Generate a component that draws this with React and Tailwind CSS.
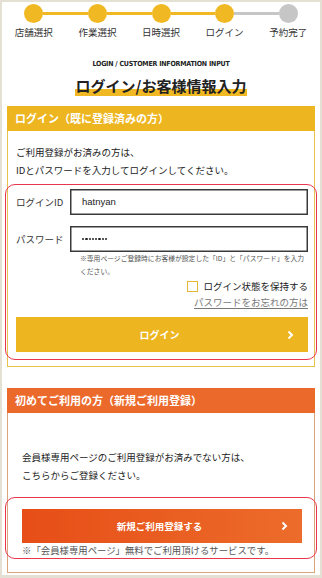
const steps = ['店舗選択', '作業選択', '日時選択', 'ログイン', '予約完了']
const current = 3

function Chevron() {
  return (
    <svg width="7" height="10" viewBox="0 0 7 10" className="shrink-0">
      <polyline points="1.5,1.5 5,5 1.5,8.5" fill="none" stroke="#fff" strokeWidth="2" />
    </svg>
  )
}

function Steps() {
  return (
    <div className="grid grid-cols-5 pt-[2px]">
      {steps.map((label, i) => {
        const leftOn = i <= current
        const rightOn = i + 1 <= current
        const done = i <= current
        return (
          <div key={label} className="flex flex-col items-center">
            <div className="flex w-full items-center h-[19px]">
              <div className={`flex-1 h-[3px] ${i === 0 ? '' : leftOn ? 'bg-[#f0b823]' : 'bg-[#c6c6c6]'}`} />
              <div className={`w-[19px] h-[19px] rounded-full shrink-0 ${done ? 'bg-[#f0b823]' : 'bg-[#c6c6c6]'}`} />
              <div className={`flex-1 h-[3px] ${i === steps.length - 1 ? '' : rightOn ? 'bg-[#f0b823]' : 'bg-[#c6c6c6]'}`} />
            </div>
            <span className="mt-[2px] text-[9.5px] leading-[14px] text-[#333]">{label}</span>
          </div>
        )
      })}
    </div>
  )
}

export default function App() {
  return (
    <div className="h-[578px] bg-white border-2 border-b-[3px] border-[#e5e0d4] font-['Noto_Sans_CJK_JP','Liberation_Sans',sans-serif] text-[#222] overflow-hidden">
      <Steps />

      <div className="mt-[20px] text-center text-[7px] leading-[10px] font-bold tracking-[-0.2px] text-[#222] font-['DejaVu_Sans_Condensed','Liberation_Sans',sans-serif]">
        LOGIN / CUSTOMER INFORMATION INPUT
      </div>
      <div className="mt-[4px] text-center">
        <span className="inline-block text-[15px] leading-[21px] font-bold bg-[linear-gradient(transparent_68%,#f0b823_68%)] px-[1px]">
          ログイン/お客様情報入力
        </span>
      </div>

      <div className="px-[5px]">
        {/* login card */}
        <div className="mt-[9px]">
          <div className="h-[25px] flex items-center px-[8px] bg-[#edb520] text-white text-[11px] font-bold">
            ログイン（既に登録済みの方）
          </div>
          <div className="border border-t-0 border-[#e8c24f] pt-[12px] pb-[6px]">
            <p className="px-[8px] text-[9.5px] leading-[18px]">
              ご利用登録がお済みの方は、<br />
              IDとパスワードを入力してログインしてください。
            </p>
            <div className="-mx-[3px] mt-[5px] border border-[#e8364c] rounded-[10px] pt-[4px] pb-[7px] pl-[10px] pr-[8px]">
              <div className="flex items-center">
                <span className="w-[54px] shrink-0 text-[9.5px] text-[#333]">ログインID</span>
                <div className="flex-1 h-[26px] border border-[#3a3a3a] shadow-[inset_0_0_0_0.5px_#3a3a3a] flex items-center pl-[11px] text-[9.5px] font-['Liberation_Sans',sans-serif]">
                  hatnyan
                </div>
              </div>
              <div className="flex items-center mt-[11px]">
                <span className="w-[54px] shrink-0 text-[9.5px] text-[#333]">パスワード</span>
                <div className="flex-1 h-[26px] border border-[#3a3a3a] shadow-[inset_0_0_0_0.5px_#3a3a3a] flex items-center gap-[1px] pl-[11px]">
                  {[0, 1, 2, 3, 4, 5, 6, 7].map((n) => (
                    <span key={n} className="w-[2.3px] h-[2.3px] rounded-full bg-[#222]" />
                  ))}
                </div>
              </div>
              <p className="ml-[64px] text-[6.8px] leading-[13px] text-[#555]">
                ※専用ページご登録時にお客様が設定した「ID」と「パスワード」を入力<br />
                ください。
              </p>
              <div className="mt-[1px] flex justify-end items-center gap-[5px] text-[9.5px] leading-[14px] text-[#222]">
                <span className="w-[11px] h-[11px] border border-[#e2b735] bg-white" />
                <span>ログイン状態を保持する</span>
              </div>
              <div className="mt-[2px] text-right text-[9.5px] leading-[14px]">
                <span className="underline text-[#777] underline-offset-2">パスワードをお忘れの方は</span>
              </div>
              <div className="mt-[8px] h-[35px] bg-[#edb520] flex items-center text-white text-[10px] font-bold pl-[16px] pr-[14px]">
                <span className="flex-1 text-center">ログイン</span>
                <Chevron />
              </div>
            </div>
          </div>
        </div>

        {/* register card */}
        <div className="mt-[21px]">
          <div className="h-[25px] flex items-center px-[8px] bg-[#ec692c] text-white text-[11px] font-bold">
            初めてご利用の方（新規ご利用登録）
          </div>
          <div className="border border-t-0 border-[#dba47b] pt-[35px] pb-[13px]">
            <p className="px-[14px] text-[9.5px] leading-[18px]">
              会員様専用ページのご利用登録がお済みでない方は、<br />
              こちらからご登録ください。
            </p>
            <div className="-mx-[3px] mt-[13px] border border-[#e8364c] rounded-[10px] pt-[11px] pb-[1px] pl-[16px] pr-[14px]">
              <div className="h-[34px] bg-[linear-gradient(90deg,#e74e17,#ec6c2b)] flex items-center text-white text-[9.5px] font-bold pl-[16px] pr-[14px]">
                <span className="flex-1 text-center">新規ご利用登録する</span>
                <Chevron />
              </div>
              <p className="mt-[1px] text-[9.4px] leading-[13px] text-[#555] whitespace-nowrap">
                ※「会員様専用ページ」無料でご利用頂けるサービスです。
              </p>
            </div>
          </div>
        </div>
      </div>
    </div>
  )
}
